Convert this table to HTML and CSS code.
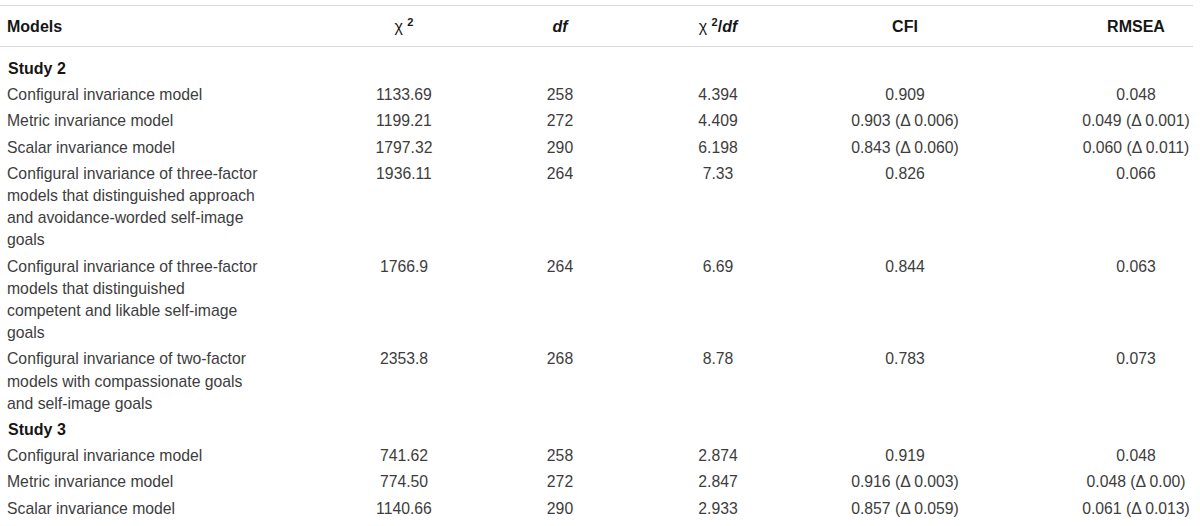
FILE: index.html
```html
<!DOCTYPE html>
<html lang="en">
<head>
<meta charset="utf-8">
<title>Measurement invariance models</title>
<link rel="stylesheet" href="styles.css">
</head>
<body>
<table class="tbl">
  <colgroup>
    <col class="col-models">
    <col class="col-chi">
    <col class="col-df">
    <col class="col-ratio">
    <col class="col-cfi">
    <col class="col-rmsea">
  </colgroup>
  <thead>
    <tr>
      <th class="c-models">Models</th>
      <th><span class="chi">χ</span> <sup class="sup">2</sup></th>
      <th><i>df</i></th>
      <th><span class="chi">χ</span> <sup class="sup">2</sup>/<i>df</i></th>
      <th>CFI</th>
      <th class="c-rmsea">RMSEA</th>
    </tr>
  </thead>
  <tbody>
    <tr class="study first">
      <td class="c-study" colspan="6">Study 2</td>
    </tr>
    <tr>
      <td class="c-models">Configural invariance model</td>
      <td>1133.69</td><td>258</td><td>4.394</td><td>0.909</td><td class="c-rmsea">0.048</td>
    </tr>
    <tr>
      <td class="c-models">Metric invariance model</td>
      <td>1199.21</td><td>272</td><td>4.409</td><td>0.903 (Δ 0.006)</td><td class="c-rmsea">0.049 (Δ 0.001)</td>
    </tr>
    <tr>
      <td class="c-models">Scalar invariance model</td>
      <td>1797.32</td><td>290</td><td>6.198</td><td>0.843 (Δ 0.060)</td><td class="c-rmsea">0.060 (Δ 0.011)</td>
    </tr>
    <tr>
      <td class="c-models">Configural invariance of three-factor models that distinguished approach and avoidance-worded self-image goals</td>
      <td>1936.11</td><td>264</td><td>7.33</td><td>0.826</td><td class="c-rmsea">0.066</td>
    </tr>
    <tr>
      <td class="c-models">Configural invariance of three-factor models that distinguished competent and likable self-image goals</td>
      <td>1766.9</td><td>264</td><td>6.69</td><td>0.844</td><td class="c-rmsea">0.063</td>
    </tr>
    <tr>
      <td class="c-models">Configural invariance of two-factor models with compassionate goals and self-image goals</td>
      <td>2353.8</td><td>268</td><td>8.78</td><td>0.783</td><td class="c-rmsea">0.073</td>
    </tr>
    <tr class="study">
      <td class="c-study" colspan="6">Study 3</td>
    </tr>
    <tr>
      <td class="c-models">Configural invariance model</td>
      <td>741.62</td><td>258</td><td>2.874</td><td>0.919</td><td class="c-rmsea">0.048</td>
    </tr>
    <tr>
      <td class="c-models">Metric invariance model</td>
      <td>774.50</td><td>272</td><td>2.847</td><td>0.916 (Δ 0.003)</td><td class="c-rmsea">0.048 (Δ 0.00)</td>
    </tr>
    <tr>
      <td class="c-models">Scalar invariance model</td>
      <td>1140.66</td><td>290</td><td>2.933</td><td>0.857 (Δ 0.059)</td><td class="c-rmsea">0.061 (Δ 0.013)</td>
    </tr>
  </tbody>
</table>
</body>
</html>
```

FILE: styles.css
```css
html, body {
  margin: 0;
  padding: 0;
  background: #ffffff;
}

body {
  font-family: "Liberation Sans", Arial, Helvetica, sans-serif;
}

.tbl {
  margin-top: 5px;
  width: 1193px;
  table-layout: fixed;
  border-collapse: collapse;
  border-spacing: 0;
}

.col-models { width: 340px; }
.col-chi { width: 128px; }
.col-df { width: 184px; }
.col-ratio { width: 132px; }
.col-cfi { width: 242px; }
.col-rmsea { width: 167px; }

.tbl th {
  font-size: 16px;
  font-weight: bold;
  color: #161616;
  line-height: 22px;
  padding: 10px 0 8px 0;
  text-align: center;
  border-top: 1px solid #d9d9d9;
  border-bottom: 1px solid #d9d9d9;
  vertical-align: middle;
}

.tbl th.c-models {
  text-align: left;
  padding-left: 7px;
}

.chi {
  font-weight: normal;
}

.sup {
  font-size: 11px;
  font-weight: bold;
  vertical-align: 6px;
  line-height: 0;
}

.tbl td {
  font-size: 15.75px;
  color: #3d3d3d;
  line-height: 22.2px;
  padding: 2px 0;
  text-align: center;
  vertical-align: top;
}

.tbl td.c-models {
  text-align: left;
  padding-left: 7px;
  padding-right: 79px;
}

.tbl td.c-rmsea,
.tbl th.c-rmsea {
  padding-left: 53px;
}

.tbl td.c-study {
  text-align: left;
  padding-left: 8px;
  font-size: 16px;
  font-weight: bold;
  color: #161616;
}

.study.first td {
  padding-top: 11px;
}
```
